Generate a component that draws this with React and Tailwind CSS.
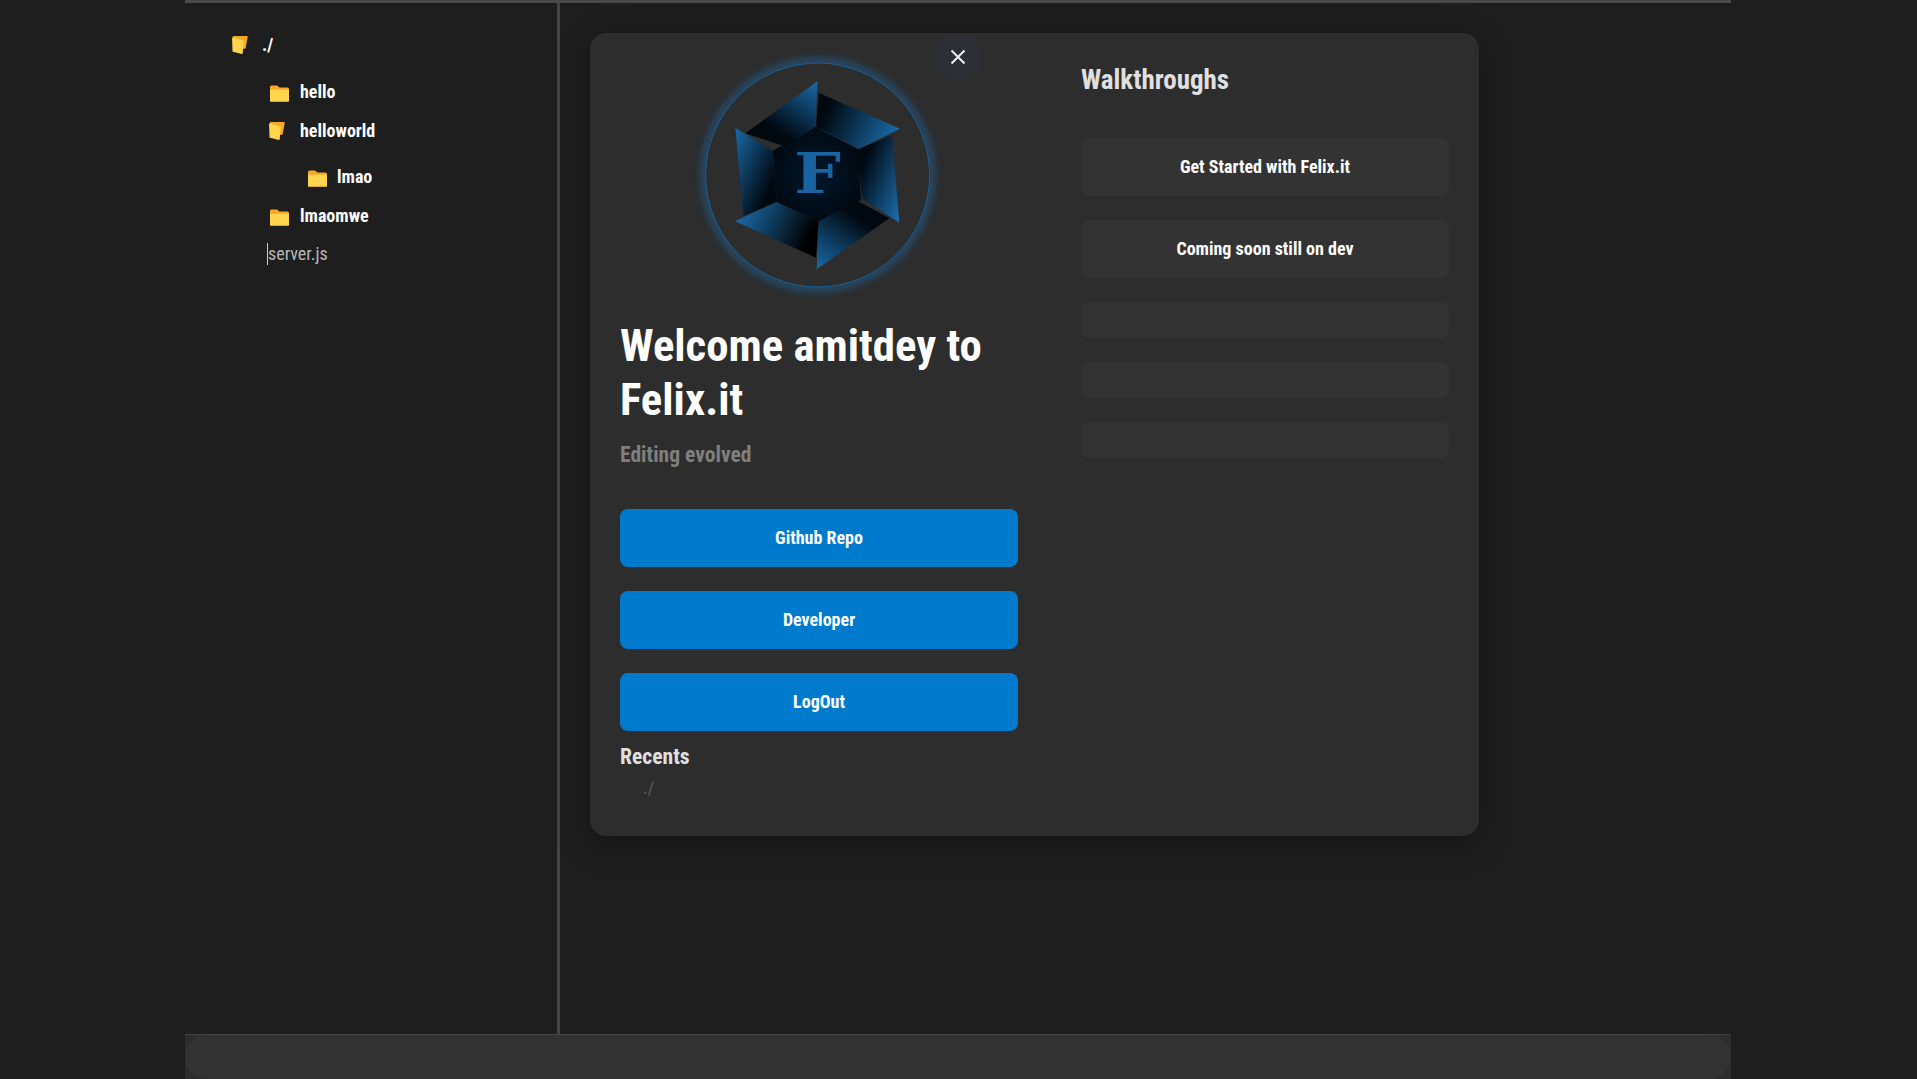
import React from "react";

const font = { fontFamily: "Roboto, sans-serif" };

function FolderClosed() {
  return (
    <svg width="19" height="17" viewBox="0 0 19 17" className="mt-[3px] shrink-0">
      <path d="M0 2 Q0 0.5 1.5 0.5 H7 L9.5 2.5 H17.5 Q19 2.5 19 4 V7 H0 Z" fill="#f9a825" />
      <path d="M0 4.8 H19 V15.5 Q19 16.8 17.8 16.8 H1.2 Q0 16.8 0 15.5 Z" fill="#ffd54f" />
      <path d="M0.3 16 H18.7 V16.2 Q18.5 16.8 17.8 16.8 H1.2 Q0.5 16.8 0.3 16.2 Z" fill="#e0a92e" />
    </svg>
  );
}

function FolderOpen() {
  return (
    <svg width="16" height="18" viewBox="0 0 16 18" className="shrink-0">
      <path d="M1.5 0.8 H15 L13 12 H10 V5 Z" fill="#f9a825" stroke="#f9a825" strokeWidth="1.4" strokeLinejoin="round" />
      <path d="M0.8 2 L11 5.2 L10 17.2 L1.2 15 Z" fill="#ffd54f" stroke="#ffd54f" strokeWidth="1.4" strokeLinejoin="round" />
    </svg>
  );
}

function Logo() {
  return (
    <div className="-mt-[8px] flex justify-center">
      <svg width="240" height="240" viewBox="59 75 720 720" className="overflow-visible">
        <defs>
          <filter id="g" x="-20%" y="-20%" width="140%" height="140%">
            <feGaussianBlur stdDeviation="12" />
          </filter>
          <linearGradient id="a" x1="1" y1="0" x2="0.3" y2="0.95">
            <stop offset="0" stopColor="#1a6aa8" />
            <stop offset="0.8" stopColor="#000810" />
          </linearGradient>
          <linearGradient id="b" x1="0" y1="0.3" x2="1" y2="0.6">
            <stop offset="0.12" stopColor="#000810" />
            <stop offset="1" stopColor="#1a6aa8" />
          </linearGradient>
          <linearGradient id="c" x1="0" y1="0.1" x2="1" y2="0.9">
            <stop offset="0.2" stopColor="#000810" />
            <stop offset="1" stopColor="#1a6aa8" />
          </linearGradient>
          <linearGradient id="d" x1="0" y1="1" x2="0.7" y2="0.05">
            <stop offset="0" stopColor="#1a6aa8" />
            <stop offset="0.8" stopColor="#000810" />
          </linearGradient>
          <linearGradient id="e" x1="0" y1="0.4" x2="1" y2="0.7">
            <stop offset="0" stopColor="#1a6aa8" />
            <stop offset="0.88" stopColor="#000" />
          </linearGradient>
          <linearGradient id="f" x1="0" y1="0" x2="1" y2="0.9">
            <stop offset="0" stopColor="#1a6aa8" />
            <stop offset="0.8" stopColor="#000810" />
          </linearGradient>
          <radialGradient id="h">
            <stop offset="0" stopColor="#00182c" />
            <stop offset="1" stopColor="#000a14" />
          </radialGradient>
        </defs>
        <circle cx="415" cy="435" r="340" fill="none" stroke="#1a73c0" strokeWidth="14" filter="url(#g)" opacity="0.75" />
        <circle cx="415" cy="435" r="336" fill="#2d2d2d" stroke="#1a5f95" strokeWidth="3" />
        <polygon points="408,290 535,358 545,510 418,575 292,516 280,362" fill="url(#h)" />
        <polygon points="415,153 408,290 320,350 198,310" fill="url(#a)" />
        <polygon points="418,188 662,296 540,356 410,290" fill="url(#b)" />
        <polygon points="638,315 660,578 548,505 532,360" fill="url(#c)" />
        <polygon points="412,718 418,575 530,510 630,565" fill="url(#d)" />
        <polygon points="167,574 290,516 418,575 410,683" fill="url(#e)" />
        <polygon points="168,293 280,362 292,516 192,558" fill="url(#f)" />
        <text x="415" y="490" textAnchor="middle" fontFamily="'DejaVu Serif', serif" fontWeight="700" fontSize="168" textLength="140" lengthAdjust="spacingAndGlyphs" fill="#1a63a3">F</text>
      </svg>
    </div>
  );
}

function Row({ indent, open, children, className, gap }) {
  return (
    <div className={`flex items-center text-[18px] font-bold text-white font-stretch-condensed ${indent} ${className}`}>
      {open ? <FolderOpen /> : <FolderClosed />}
      <span className={`pb-[2px] ${gap}`}>{children}</span>
    </div>
  );
}

function Blue({ children }) {
  return (
    <div className="flex h-[58px] items-center justify-center rounded-[8px] bg-[#007acc] pb-[2px] text-[18px] font-bold text-white font-stretch-condensed">
      {children}
    </div>
  );
}

export default function App() {
  return (
    <div className="flex h-[1079px] justify-center bg-[#1e1e1e] pr-[1px]" style={font}>
      <div className="flex w-[1546px] flex-col border-t-[3px] border-[#4a4a4a]">
        <div className="flex min-h-0 flex-1">
          <aside className="w-[375px] shrink-0 border-r-[3px] border-[#444] pt-[30px]">
            <Row indent="ml-[47px]" open gap="ml-[14px]" className="h-[24px]">./</Row>
            <Row indent="ml-[85px] mt-[23px]" gap="ml-[11px]" className="h-[24px]">hello</Row>
            <Row indent="ml-[84px] mt-[15px]" open gap="ml-[15px]" className="h-[24px]">helloworld</Row>
            <Row indent="ml-[123px] mt-[22px]" gap="ml-[10px]" className="h-[24px]">lmao</Row>
            <Row indent="ml-[85px] mt-[15px]" gap="ml-[11px]" className="h-[24px]">lmaomwe</Row>
            <div className="ml-[82px] mt-[14px] flex h-[24px] items-center text-[18px] text-[#b8b8b8] font-stretch-condensed">
              <span className="border-l border-[#cccccc] leading-[22px]">server.js</span>
            </div>
          </aside>
          <main className="min-w-0 flex-1 pl-[30px] pt-[30px]">
            <div className="relative flex h-[803px] w-[889px] rounded-[16px] bg-[#2d2d2d] px-[30px] pt-[30px] shadow-[0_8px_32px_rgba(0,0,0,0.35)]">
              <button className="absolute left-[344px] top-[0px] flex h-[48px] w-[48px] items-center justify-center rounded-full bg-[#2c3036]">
                <svg width="16" height="16" viewBox="0 0 16 16" stroke="#eeeeee" strokeWidth="2" fill="none">
                  <path d="M1.5 1.5 L14.5 14.5 M14.5 1.5 L1.5 14.5" />
                </svg>
              </button>
              <div className="w-[398px] shrink-0">
                <Logo />
                <h1 className="mt-[24px] text-[44.8px] font-bold leading-[54px] text-white font-stretch-condensed">Welcome amitdey to Felix.it</h1>
                <p className="mt-[14px] text-[21.6px] font-bold leading-[28px] text-[#7f7f7f] font-stretch-condensed">Editing evolved</p>
                <div className="mt-[40px] flex flex-col gap-[24px]">
                  <Blue>Github Repo</Blue>
                  <Blue>Developer</Blue>
                  <Blue>LogOut</Blue>
                </div>
                <h3 className="mt-[12px] text-[21.6px] font-bold leading-[28px] text-[#e0e0e0] font-stretch-condensed">Recents</h3>
                <p className="mt-[5px] pl-[23px] text-[18px] leading-[24px] text-[#5c5c5c] font-stretch-condensed">./</p>
              </div>
              <div className="ml-[63px] w-[369px]">
                <h2 className="text-[27px] font-bold leading-[34px] text-[#e0e0e0] font-stretch-condensed">Walkthroughs</h2>
                <div className="mt-[41px] flex flex-col">
                  <div className="flex h-[58px] items-center justify-center rounded-[8px] bg-[#333333] pb-[2px] text-[18px] font-bold text-white font-stretch-condensed">Get Started with Felix.it</div>
                  <div className="mt-[24px] flex h-[58px] items-center justify-center rounded-[8px] bg-[#333333] pb-[2px] text-[18px] font-bold text-white font-stretch-condensed">Coming soon still on dev</div>
                  <div className="mt-[24px] h-[36px] rounded-[8px] bg-[#333333]" />
                  <div className="mt-[24px] h-[36px] rounded-[8px] bg-[#333333]" />
                  <div className="mt-[24px] h-[36px] rounded-[8px] bg-[#333333]" />
                </div>
              </div>
            </div>
          </main>
        </div>
        <div className="h-[45px] shrink-0 border-t border-[#444] bg-[#2d2d2d]">
          <div className="h-full rounded-[22px] bg-[#333333]" />
        </div>
      </div>
    </div>
  );
}
